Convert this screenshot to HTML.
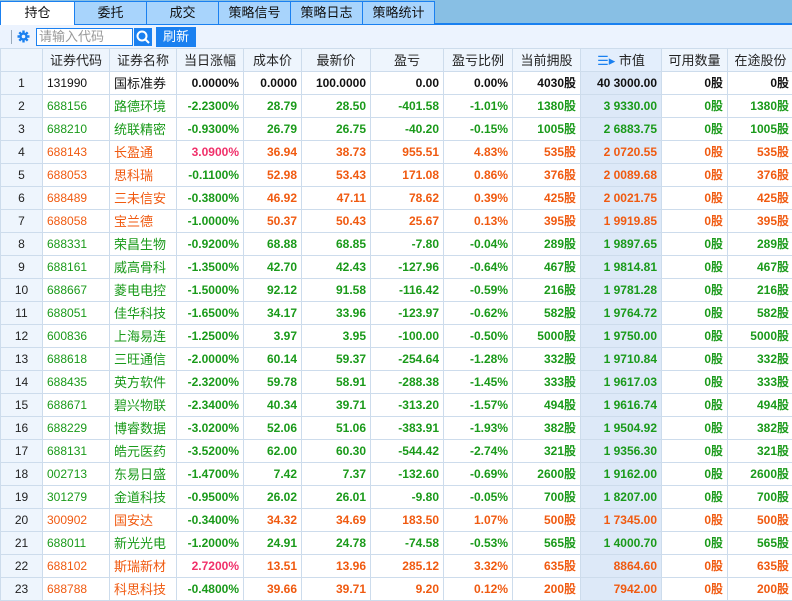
<!DOCTYPE html><html><head><meta charset="utf-8"><style>
*{margin:0;padding:0;box-sizing:border-box}
body{width:792px;height:600px;overflow:hidden;background:#fff;font-family:"Liberation Sans","Noto Sans CJK SC",sans-serif;font-size:12px;position:relative}
.tabs{position:absolute;left:0;top:0;width:792px;height:25px;background:#88bfe4;border-bottom:2px solid #1a80f0}
.tab{position:absolute;top:1px;height:23px;background:#a8d4fc;border-right:1px solid #1a80f0;border-top:1px solid #1a80f0;text-align:center;line-height:22px;font-size:13px;color:#111}
.tab.a{background:#fff;height:25px;border-left:1px solid #1a80f0}
.tb{position:absolute;left:0;top:25px;width:792px;height:23px;background:#ecf3fe}
table{position:absolute;left:0;top:48px;border-collapse:collapse;table-layout:fixed;width:793px}
td,th{border:1px solid #cddcec;height:23px;white-space:nowrap;overflow:hidden;padding:0 4px;line-height:21px;vertical-align:middle}
th{background:#eef5fd;font-weight:normal;font-size:13px;color:#222;text-align:center;height:23px}
td{text-align:right;font-weight:bold;font-size:12px}
td:nth-child(1){background:#eef5fd;text-align:center;font-weight:normal;color:#222}
td:nth-child(2){text-align:left;font-weight:normal}
td:nth-child(3){text-align:left;font-weight:normal;font-size:13px}
td:nth-child(10){background:#dde9f8}
tr.k td{color:#111}tr.g td{color:#1a9a1a}tr.r td{color:#f05a10}
tr td:nth-child(1){color:#222}
td.p{color:#f0306a!important}td.n{color:#1a9a1a!important}
</style></head><body>
<div class="tabs">
<div class="tab a" style="left:0;width:75px">持仓</div>
<div class="tab" style="left:75px;width:72px">委托</div>
<div class="tab" style="left:147px;width:72px">成交</div>
<div class="tab" style="left:219px;width:72px">策略信号</div>
<div class="tab" style="left:291px;width:72px">策略日志</div>
<div class="tab" style="left:363px;width:72px">策略统计</div>
</div>
<div class="tb">
<div style="position:absolute;left:11px;top:5px;width:1px;height:14px;background:#9ab"></div>
<svg style="position:absolute;left:17px;top:5px" width="13" height="13" viewBox="0 0 13 13"><g stroke="#1a80f0" stroke-width="2.4"><path d="M6.5 0.5v12M0.5 6.5h12M2.3 2.3l8.4 8.4M10.7 2.3l-8.4 8.4"/></g><circle cx="6.5" cy="6.5" r="4" fill="#1a80f0"/><circle cx="6.5" cy="6.5" r="1.8" fill="#ecf3fe"/></svg>
<div style="position:absolute;left:36px;top:3px;width:97px;height:18px;border:1px solid #1a80f0;background:#fff;color:#999;font-size:13px;line-height:16px;padding-left:2px">请输入代码</div>
<div style="position:absolute;left:134px;top:3px;width:18px;height:18px;background:#1a80f0"><svg width="18" height="18"><circle cx="8" cy="8" r="4.5" stroke="#fff" stroke-width="2" fill="none"/><path d="M11 11l4 4" stroke="#fff" stroke-width="2"/></svg></div>
<div style="position:absolute;left:156px;top:2px;width:40px;height:20px;background:#1a80f0;color:#fff;font-size:13px;line-height:20px;text-align:center">刷新</div>
</div>
<table>
<colgroup><col style="width:42px"><col style="width:67px"><col style="width:67px"><col style="width:67px"><col style="width:58px"><col style="width:69px"><col style="width:73px"><col style="width:69px"><col style="width:68px"><col style="width:81px"><col style="width:66px"><col style="width:66px"></colgroup>
<tr><th></th><th>证券代码</th><th>证券名称</th><th>当日涨幅</th><th>成本价</th><th>最新价</th><th>盈亏</th><th>盈亏比例</th><th>当前拥股</th><th style="background:#e3eefc"><span style="color:#1a80f0">☰▸</span> 市值</th><th>可用数量</th><th>在途股份</th></tr>
<tr class="k"><td>1</td><td>131990</td><td>国标准券</td><td>0.0000%</td><td>0.0000</td><td>100.0000</td><td>0.00</td><td>0.00%</td><td>4030股</td><td>40 3000.00</td><td>0股</td><td>0股</td></tr>
<tr class="g"><td>2</td><td>688156</td><td>路德环境</td><td class="n">-2.2300%</td><td>28.79</td><td>28.50</td><td>-401.58</td><td>-1.01%</td><td>1380股</td><td>3 9330.00</td><td>0股</td><td>1380股</td></tr>
<tr class="g"><td>3</td><td>688210</td><td>统联精密</td><td class="n">-0.9300%</td><td>26.79</td><td>26.75</td><td>-40.20</td><td>-0.15%</td><td>1005股</td><td>2 6883.75</td><td>0股</td><td>1005股</td></tr>
<tr class="r"><td>4</td><td>688143</td><td>长盈通</td><td class="p">3.0900%</td><td>36.94</td><td>38.73</td><td>955.51</td><td>4.83%</td><td>535股</td><td>2 0720.55</td><td>0股</td><td>535股</td></tr>
<tr class="r"><td>5</td><td>688053</td><td>思科瑞</td><td class="n">-0.1100%</td><td>52.98</td><td>53.43</td><td>171.08</td><td>0.86%</td><td>376股</td><td>2 0089.68</td><td>0股</td><td>376股</td></tr>
<tr class="r"><td>6</td><td>688489</td><td>三未信安</td><td class="n">-0.3800%</td><td>46.92</td><td>47.11</td><td>78.62</td><td>0.39%</td><td>425股</td><td>2 0021.75</td><td>0股</td><td>425股</td></tr>
<tr class="r"><td>7</td><td>688058</td><td>宝兰德</td><td class="n">-1.0000%</td><td>50.37</td><td>50.43</td><td>25.67</td><td>0.13%</td><td>395股</td><td>1 9919.85</td><td>0股</td><td>395股</td></tr>
<tr class="g"><td>8</td><td>688331</td><td>荣昌生物</td><td class="n">-0.9200%</td><td>68.88</td><td>68.85</td><td>-7.80</td><td>-0.04%</td><td>289股</td><td>1 9897.65</td><td>0股</td><td>289股</td></tr>
<tr class="g"><td>9</td><td>688161</td><td>威高骨科</td><td class="n">-1.3500%</td><td>42.70</td><td>42.43</td><td>-127.96</td><td>-0.64%</td><td>467股</td><td>1 9814.81</td><td>0股</td><td>467股</td></tr>
<tr class="g"><td>10</td><td>688667</td><td>菱电电控</td><td class="n">-1.5000%</td><td>92.12</td><td>91.58</td><td>-116.42</td><td>-0.59%</td><td>216股</td><td>1 9781.28</td><td>0股</td><td>216股</td></tr>
<tr class="g"><td>11</td><td>688051</td><td>佳华科技</td><td class="n">-1.6500%</td><td>34.17</td><td>33.96</td><td>-123.97</td><td>-0.62%</td><td>582股</td><td>1 9764.72</td><td>0股</td><td>582股</td></tr>
<tr class="g"><td>12</td><td>600836</td><td>上海易连</td><td class="n">-1.2500%</td><td>3.97</td><td>3.95</td><td>-100.00</td><td>-0.50%</td><td>5000股</td><td>1 9750.00</td><td>0股</td><td>5000股</td></tr>
<tr class="g"><td>13</td><td>688618</td><td>三旺通信</td><td class="n">-2.0000%</td><td>60.14</td><td>59.37</td><td>-254.64</td><td>-1.28%</td><td>332股</td><td>1 9710.84</td><td>0股</td><td>332股</td></tr>
<tr class="g"><td>14</td><td>688435</td><td>英方软件</td><td class="n">-2.3200%</td><td>59.78</td><td>58.91</td><td>-288.38</td><td>-1.45%</td><td>333股</td><td>1 9617.03</td><td>0股</td><td>333股</td></tr>
<tr class="g"><td>15</td><td>688671</td><td>碧兴物联</td><td class="n">-2.3400%</td><td>40.34</td><td>39.71</td><td>-313.20</td><td>-1.57%</td><td>494股</td><td>1 9616.74</td><td>0股</td><td>494股</td></tr>
<tr class="g"><td>16</td><td>688229</td><td>博睿数据</td><td class="n">-3.0200%</td><td>52.06</td><td>51.06</td><td>-383.91</td><td>-1.93%</td><td>382股</td><td>1 9504.92</td><td>0股</td><td>382股</td></tr>
<tr class="g"><td>17</td><td>688131</td><td>皓元医药</td><td class="n">-3.5200%</td><td>62.00</td><td>60.30</td><td>-544.42</td><td>-2.74%</td><td>321股</td><td>1 9356.30</td><td>0股</td><td>321股</td></tr>
<tr class="g"><td>18</td><td>002713</td><td>东易日盛</td><td class="n">-1.4700%</td><td>7.42</td><td>7.37</td><td>-132.60</td><td>-0.69%</td><td>2600股</td><td>1 9162.00</td><td>0股</td><td>2600股</td></tr>
<tr class="g"><td>19</td><td>301279</td><td>金道科技</td><td class="n">-0.9500%</td><td>26.02</td><td>26.01</td><td>-9.80</td><td>-0.05%</td><td>700股</td><td>1 8207.00</td><td>0股</td><td>700股</td></tr>
<tr class="r"><td>20</td><td>300902</td><td>国安达</td><td class="n">-0.3400%</td><td>34.32</td><td>34.69</td><td>183.50</td><td>1.07%</td><td>500股</td><td>1 7345.00</td><td>0股</td><td>500股</td></tr>
<tr class="g"><td>21</td><td>688011</td><td>新光光电</td><td class="n">-1.2000%</td><td>24.91</td><td>24.78</td><td>-74.58</td><td>-0.53%</td><td>565股</td><td>1 4000.70</td><td>0股</td><td>565股</td></tr>
<tr class="r"><td>22</td><td>688102</td><td>斯瑞新材</td><td class="p">2.7200%</td><td>13.51</td><td>13.96</td><td>285.12</td><td>3.32%</td><td>635股</td><td>8864.60</td><td>0股</td><td>635股</td></tr>
<tr class="r"><td>23</td><td>688788</td><td>科思科技</td><td class="n">-0.4800%</td><td>39.66</td><td>39.71</td><td>9.20</td><td>0.12%</td><td>200股</td><td>7942.00</td><td>0股</td><td>200股</td></tr>
</table>
</body></html>
